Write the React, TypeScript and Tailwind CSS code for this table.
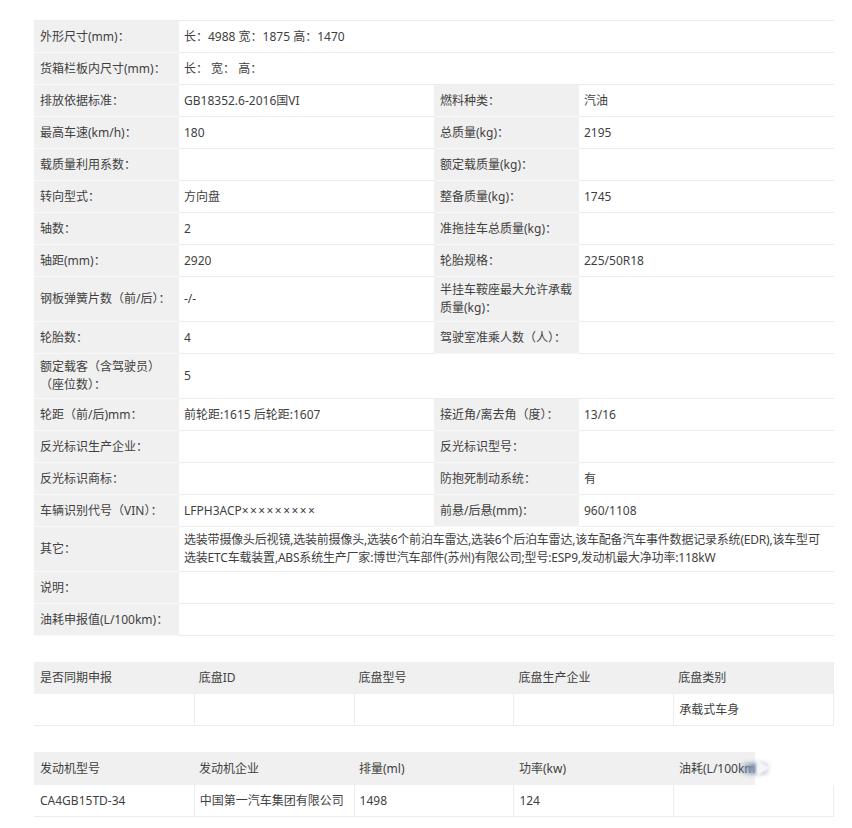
import { ReactNode } from "react";

type Cell = { label: ReactNode; value?: ReactNode };
type Row = { cells: Cell[]; span?: boolean };

// main spec table rows, left pair + right pair
const rows: Row[] = [
  { cells: [{ label: "外形尺寸(mm)：", value: "长：4988 宽：1875 高：1470" }], span: true },
  { cells: [{ label: "货箱栏板内尺寸(mm)：", value: "长： 宽： 高：" }], span: true },
  {
    cells: [
      { label: "排放依据标准：", value: "GB18352.6-2016国VI" },
      { label: "燃料种类：", value: "汽油" },
    ],
  },
  {
    cells: [
      { label: "最高车速(km/h)：", value: "180" },
      { label: "总质量(kg)：", value: "2195" },
    ],
  },
  {
    cells: [
      { label: "载质量利用系数：", value: "" },
      { label: "额定载质量(kg)：", value: "" },
    ],
  },
  {
    cells: [
      { label: "转向型式：", value: "方向盘" },
      { label: "整备质量(kg)：", value: "1745" },
    ],
  },
  {
    cells: [
      { label: "轴数：", value: "2" },
      { label: "准拖挂车总质量(kg)：", value: "" },
    ],
  },
  {
    cells: [
      { label: "轴距(mm)：", value: "2920" },
      { label: "轮胎规格：", value: "225/50R18" },
    ],
  },
  {
    cells: [
      { label: "钢板弹簧片数（前/后）：", value: "-/-" },
      {
        label: (
          <>
            半挂车鞍座最大允许承载
            <br />
            质量(kg)：
          </>
        ),
        value: "",
      },
    ],
  },
  {
    cells: [
      { label: "轮胎数：", value: "4" },
      { label: "驾驶室准乘人数（人）：", value: "" },
    ],
  },
  {
    cells: [
      {
        label: (
          <>
            额定载客（含驾驶员）
            <br />
            （座位数）：
          </>
        ),
        value: "5",
      },
    ],
    span: true,
  },
  {
    cells: [
      { label: "轮距（前/后)mm：", value: "前轮距:1615 后轮距:1607" },
      { label: "接近角/离去角（度）：", value: "13/16" },
    ],
  },
  {
    cells: [
      { label: "反光标识生产企业：", value: "" },
      { label: "反光标识型号：", value: "" },
    ],
  },
  {
    cells: [
      { label: "反光标识商标：", value: "" },
      { label: "防抱死制动系统：", value: "有" },
    ],
  },
  {
    cells: [
      {
        label: "车辆识别代号（VIN）：",
        value: (
          <>
            LFPH3ACP<span className="tracking-[1.4px]">×××××××××</span>
          </>
        ),
      },
      { label: "前悬/后悬(mm)：", value: "960/1108" },
    ],
  },
  {
    cells: [
      {
        label: "其它：",
        value: (
          <span className="whitespace-nowrap tracking-[-0.2px]">
            选装带摄像头后视镜,选装前摄像头,选装6个前泊车雷达,选装6个后泊车雷达,该车配备汽车事件数据记录系统(EDR),该车型可
            <br />
            选装ETC车载装置,ABS系统生产厂家:博世汽车部件(苏州)有限公司;型号:ESP9,发动机最大净功率:118kW
          </span>
        ),
      },
    ],
    span: true,
  },
  { cells: [{ label: "说明：", value: "" }], span: true },
  { cells: [{ label: "油耗申报值(L/100km)：", value: "" }], span: true },
];

const chassisHead = ["是否同期申报", "底盘ID", "底盘型号", "底盘生产企业", "底盘类别"];
const chassisBody = ["", "", "", "", "承载式车身"];

const engineHead = ["发动机型号", "发动机企业", "排量(ml)", "功率(kw)"];
const engineBody = ["CA4GB15TD-34", "中国第一汽车集团有限公司", "1498", "124", ""];

function Label({ children }: { children: ReactNode }) {
  return (
    <div className="flex items-center bg-[#f0f0f0] border-b border-[#f8f8f8] pl-[6px] pr-1 py-1 min-h-[32px]">
      <span>{children}</span>
    </div>
  );
}

function Value({ children, wide }: { children: ReactNode; wide?: boolean }) {
  return (
    <div
      className={
        "flex items-center bg-white border-b border-[#ececec] px-[5px] py-1 min-h-[32px]" +
        (wide ? " col-span-3" : "")
      }
    >
      <span>{children}</span>
    </div>
  );
}

export default function App() {
  return (
    <div
      className="w-[852px] min-h-[828px] bg-white pt-5 pl-[34px] text-[12px] leading-[18px] text-[#3f3f3f]"
      style={{ fontFamily: '"Noto Sans", "Noto Sans CJK SC", sans-serif' }}
    >
      {/* spec table */}
      <div className="w-[800px] grid grid-cols-[145px_255px_145px_255px] border-t border-r border-[#ececec]">
        {rows.map((row, i) =>
          row.cells.map((c, j) => (
            <div key={`${i}-${j}`} className="contents">
              <Label>{c.label}</Label>
              <Value wide={row.span}>{c.value}</Value>
            </div>
          ))
        )}
      </div>

      {/* chassis table */}
      <div className="mt-[26px] w-[800px] border-r border-[#ececec]">
        <div className="grid grid-cols-5 bg-[#f0f0f0] h-8">
          {chassisHead.map((h) => (
            <div key={h} className="flex items-center pl-[5px] first:pl-[6px]">
              {h}
            </div>
          ))}
        </div>
        <div className="grid grid-cols-5 h-8 border-b border-[#ececec]">
          {chassisBody.map((v, i) => (
            <div
              key={i}
              className="flex items-center pl-[5px] border-l border-[#ececec] first:border-l-0"
            >
              {v}
            </div>
          ))}
        </div>
      </div>

      {/* engine table */}
      <div className="mt-[26px] w-[800px]">
        <div className="grid grid-cols-5 h-[33px]">
          {engineHead.map((h) => (
            <div key={h} className="flex items-center bg-[#f0f0f0] pl-[5px] first:pl-[6px]">
              {h}
            </div>
          ))}
          <div className="relative flex items-center pl-[5px] overflow-hidden bg-[linear-gradient(to_right,#f0f0f0_0,#f0f0f0_80px,#ffffff_82px)]">
            <span className="whitespace-nowrap">油耗(L/100km)</span>
            <span className="absolute left-[64px] top-[11px] w-[32px] h-[11px] bg-[linear-gradient(to_right,rgba(240,240,240,0),#7f93ad_45%,#9aabc2_75%,rgba(255,255,255,0))] blur-[2px] rounded-full" />
            <span className="absolute left-[82px] top-[6px] w-0 h-0 border-y-[10px] border-y-transparent border-l-[14px] border-l-[#f4f5f8] blur-[1px]" />
          </div>
        </div>
        <div className="grid grid-cols-5 h-8 border-b border-r border-[#ececec]">
          {engineBody.map((v, i) => (
            <div
              key={i}
              className="flex items-center pl-[5px] first:pl-[6px] border-l border-[#ececec] first:border-l-0"
            >
              {v}
            </div>
          ))}
        </div>
      </div>
    </div>
  );
}
